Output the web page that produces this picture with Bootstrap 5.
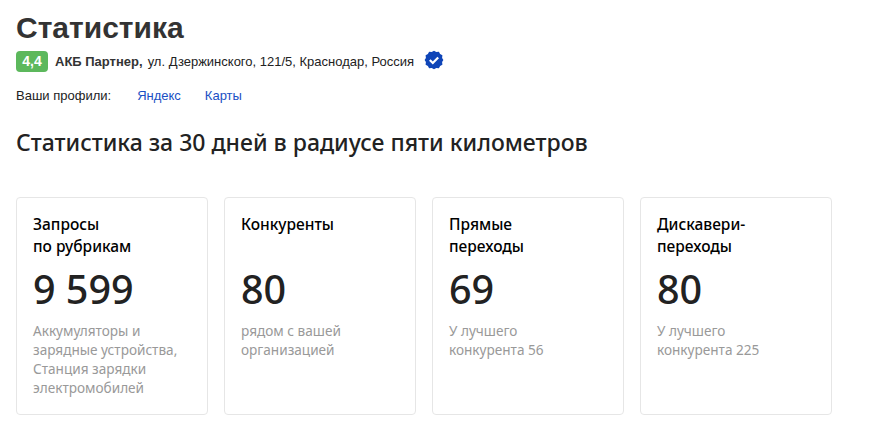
<!DOCTYPE html>
<html lang="ru">
<head>
  <meta charset="UTF-8" />
  <meta name="viewport" content="width=device-width, initial-scale=1.0"/>
  <title>Статистика</title>
  <link rel="stylesheet" href="https://cdn.jsdelivr.net/npm/bootstrap@5.3.0/dist/css/bootstrap.min.css" />
  <style>
    body {
      background: #fff;
      color: #2b2b2b;
      font-family: "Liberation Sans", Arial, sans-serif;
      overflow: hidden;
    }
    .page-wrap { padding: 10px 16px 0; }
    .page-title { font-size: 30px; line-height: 36px; font-weight: 700; color: #333; margin: 0 0 5px; }
    .rating-pill {
      background: #5cb85c; color: #fff; font-size: 14px; font-weight: 700;
      width: 32px; height: 21px; border-radius: 4px; margin-right: 7px;
    }
    .biz-line { font-size: 13px; color: #222; height: 21px; }
    .biz-name { font-size: 13px; font-weight: 700; color: #333; margin-right: 5px; }
    .biz-icon { margin-left: 10px; margin-bottom: 3px; }
    .profiles { font-size: 13px; line-height: 16px; margin-top: 16px; color: #222; }
    .profiles a { color: #1a4fc4; text-decoration: none; }
    .profile-label { margin-right: 26px; }
    .profile-link { margin-right: 24px; }
    .section-title {
      font-family: "Noto Sans", sans-serif; font-size: 23px; line-height: 30px;
      font-weight: 500; color: #222; margin: 23px 0 40px;
    }
    .stat-box {
      width: 192px; height: 218px; border: 1px solid #e6e6e6; border-radius: 4px;
      padding: 15px 16px; flex: none;
    }
    .stat-name { font-family: "Noto Sans", sans-serif; font-size: 15.5px; line-height: 22px; font-weight: 500; color: #000; height: 44px; }
    .stat-num { font-family: "Noto Sans", sans-serif; font-size: 39.5px; line-height: 48px; font-weight: 500; color: #222; margin: 8px 0 8px; }
    .stat-note { font-family: "Noto Sans", sans-serif; font-size: 13.6px; line-height: 19px; color: #999; }
  </style>
</head>
<body>
  <div class="page-wrap">
    <h1 class="page-title">Статистика</h1>
    <div class="biz-line d-flex align-items-center">
      <span class="rating-pill d-flex align-items-center justify-content-center">4,4</span>
      <span class="biz-name">АКБ Партнер,</span>
      <span>ул. Дзержинского, 121/5, Краснодар, Россия</span>
      <svg class="biz-icon" width="20" height="20" viewBox="0 0 20 20">
        <path fill="#0f45b8" d="M10 .8l2.3 1.3 2.6-.3 1.2 2.3 2.3 1.2-.3 2.6 1.3 2.1-1.3 2.1.3 2.6-2.3 1.2-1.2 2.3-2.6-.3L10 19.2l-2.3-1.3-2.6.3-1.2-2.3-2.3-1.2.3-2.6L.6 10l1.3-2.1-.3-2.6 2.3-1.2 1.2-2.3 2.6.3z"/>
        <path fill="none" stroke="#fff" stroke-width="2.2" d="M5.8 10l3 3 5.4-5.6"/>
      </svg>
    </div>
    <div class="profiles d-flex">
      <span class="profile-label">Ваши профили:</span>
      <a class="profile-link" href="#">Яндекс</a>
      <a href="#">Карты</a>
    </div>
    <h2 class="section-title">Статистика за 30 дней в радиусе пяти километров</h2>
    <div class="d-flex gap-3">
      <div class="stat-box">
        <div class="stat-name">Запросы<br>по рубрикам</div>
        <div class="stat-num">9 599</div>
        <div class="stat-note">Аккумуляторы и<br>зарядные устройства,<br>Станция зарядки<br>электромобилей</div>
      </div>
      <div class="stat-box">
        <div class="stat-name">Конкуренты</div>
        <div class="stat-num">80</div>
        <div class="stat-note">рядом с вашей<br>организацией</div>
      </div>
      <div class="stat-box">
        <div class="stat-name">Прямые<br>переходы</div>
        <div class="stat-num">69</div>
        <div class="stat-note">У лучшего<br>конкурента 56</div>
      </div>
      <div class="stat-box">
        <div class="stat-name">Дискавери-<br>переходы</div>
        <div class="stat-num">80</div>
        <div class="stat-note">У лучшего<br>конкурента 225</div>
      </div>
    </div>
  </div>
  <script src="https://cdn.jsdelivr.net/npm/bootstrap@5.3.0/dist/js/bootstrap.bundle.min.js"></script>
</body>
</html>
